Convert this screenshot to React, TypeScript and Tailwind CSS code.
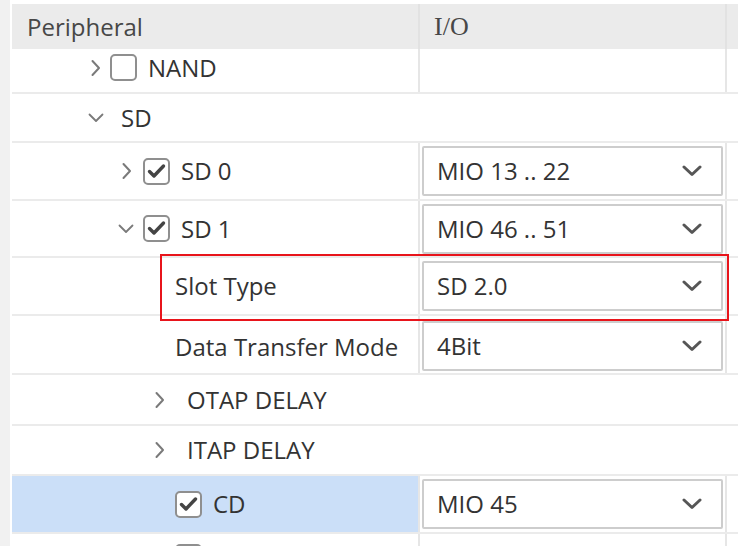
import React from "react";

const font = { fontFamily: '"Open Sans", "Noto Sans", sans-serif' };

function ChevronRight() {
  return (
    <svg width="12" height="18" viewBox="0 0 12 18" className="shrink-0">
      <path d="M2.5 2 L9 9 L2.5 16" fill="none" stroke="#7a7a7a" strokeWidth="2" strokeLinecap="round" strokeLinejoin="round" />
    </svg>
  );
}

function ChevronDown() {
  return (
    <svg width="16" height="10" viewBox="0 0 16 10" className="shrink-0">
      <path d="M1.5 1.5 L8 8 L14.5 1.5" fill="none" stroke="#7a7a7a" strokeWidth="1.8" strokeLinecap="round" strokeLinejoin="round" />
    </svg>
  );
}

function Checkbox({ checked }: { checked: boolean }) {
  return (
    <div className="w-[27px] h-[27px] shrink-0 rounded-[5px] border-2 border-[#8f8f8f] bg-white flex items-center justify-center">
      {checked && (
        <svg width="21" height="21" viewBox="0 0 21 21">
          <path d="M3.5 10.5 L8 15 L17.5 5" fill="none" stroke="#444444" strokeWidth="3.4" strokeLinecap="round" strokeLinejoin="round" />
        </svg>
      )}
    </div>
  );
}

function Dropdown({ value }: { value: string }) {
  return (
    <div className="h-[50px] ml-[2px] mr-[2px] border-2 border-[#cdcdcd] rounded-[2px] bg-white flex items-center justify-between pl-[13px] pr-[19px]">
      <span className="text-[24px] text-[#333333] leading-none" style={font}>{value}</span>
      <svg width="20" height="12" viewBox="0 0 20 12">
        <path d="M2 2 L10 9.5 L18 2" fill="none" stroke="#565656" strokeWidth="3" strokeLinecap="round" strokeLinejoin="round" />
      </svg>
    </div>
  );
}

function TwoCol({
  h,
  left,
  right,
  selected,
}: {
  h: string;
  left: React.ReactNode;
  right?: React.ReactNode;
  selected?: boolean;
}) {
  return (
    <div className={`flex border-b-2 border-[#ebebeb] ${h}`}>
      <div className={`w-[408px] shrink-0 border-r-2 border-[#e6e6e6] flex items-center ${selected ? "bg-[#cbdff8]" : ""}`}>
        {left}
      </div>
      <div className="w-[307px] shrink-0 border-r-2 border-[#e6e6e6] flex flex-col justify-center">{right}</div>
      <div className="flex-1" />
    </div>
  );
}

function Span({ h, children }: { h: string; children: React.ReactNode }) {
  return <div className={`flex items-center border-b-2 border-[#ebebeb] ${h}`}>{children}</div>;
}

const txt = "text-[24px] text-[#333333] leading-none";

export default function App() {
  return (
    <div className="w-[738px] h-[546px] overflow-hidden bg-white flex" style={font}>
      <div className="w-[10px] shrink-0 bg-[#f1f1f1]" />
      <div className="w-[2px] shrink-0 bg-white" />
      <div className="flex-1 flex flex-col pt-[4px]">
        {/* header */}
        <div className="flex h-[45px] bg-[#ebebeb] shrink-0">
          <div className="w-[408px] shrink-0 border-r-2 border-[#e2e2e2] flex items-center pl-[15px]">
            <span className="text-[24px] text-[#474747] leading-none">Peripheral</span>
          </div>
          <div className="w-[307px] shrink-0 border-r-2 border-[#e2e2e2] flex items-center pl-[14px]">
            <span className="text-[26px] text-[#474747] leading-none" style={{ fontFamily: '"Liberation Serif", serif' }}>
              I/O
            </span>
          </div>
          <div className="flex-1" />
        </div>

        {/* NAND */}
        <TwoCol
          h="h-[45px] shrink-0"
          left={
            <div className="flex items-center pl-[78px] pb-[6px]">
              <ChevronRight />
              <div className="w-[8px]" />
              <Checkbox checked={false} />
              <span className={`${txt} ml-[11px]`}>NAND</span>
            </div>
          }
        />

        {/* SD */}
        <Span h="h-[49px] shrink-0">
          <div className="flex items-center pl-[76px]">
            <ChevronDown />
            <span className={`${txt} ml-[17px]`}>SD</span>
          </div>
        </Span>

        {/* SD 0 */}
        <TwoCol
          h="h-[58px] shrink-0"
          left={
            <div className="flex items-center pl-[109px]">
              <ChevronRight />
              <div className="w-[10px]" />
              <Checkbox checked />
              <span className={`${txt} ml-[11px]`}>SD 0</span>
            </div>
          }
          right={<Dropdown value="MIO 13 .. 22" />}
        />

        {/* SD 1 */}
        <TwoCol
          h="h-[57px] shrink-0"
          left={
            <div className="flex items-center pl-[106px]">
              <ChevronDown />
              <div className="w-[9px]" />
              <Checkbox checked />
              <span className={`${txt} ml-[11px]`}>SD 1</span>
            </div>
          }
          right={<Dropdown value="MIO 46 .. 51" />}
        />

        {/* Slot Type */}
        <TwoCol
          h="h-[58px] shrink-0"
          left={<span className={`${txt} pl-[163px]`}>Slot Type</span>}
          right={<Dropdown value="SD 2.0" />}
        />

        {/* Data Transfer Mode */}
        <TwoCol
          h="h-[59px] shrink-0"
          left={<span className={`${txt} pl-[163px] pt-[4px]`}>Data Transfer Mode</span>}
          right={<div className="pt-[3px]"><Dropdown value="4Bit" /></div>}
        />

        {/* OTAP */}
        <Span h="h-[51px] shrink-0">
          <div className="flex items-center pl-[142px]">
            <ChevronRight />
            <span className={`${txt} ml-[21px]`}>OTAP DELAY</span>
          </div>
        </Span>

        {/* ITAP */}
        <Span h="h-[50px] shrink-0">
          <div className="flex items-center pl-[142px]">
            <ChevronRight />
            <span className={`${txt} ml-[21px]`}>ITAP DELAY</span>
          </div>
        </Span>

        {/* CD */}
        <TwoCol
          h="h-[58px] shrink-0"
          selected
          left={
            <div className="flex items-center pl-[163px]">
              <Checkbox checked />
              <span className={`${txt} ml-[11px]`}>CD</span>
            </div>
          }
          right={<Dropdown value="MIO 45" />}
        />

        {/* partial next row */}
        <div className="flex h-[58px] shrink-0">
          <div className="w-[408px] shrink-0 border-r-2 border-[#e6e6e6] flex items-start pt-[10px] pl-[163px]">
            <Checkbox checked={false} />
          </div>
          <div className="w-[307px] shrink-0 border-r-2 border-[#e6e6e6]" />
          <div className="flex-1" />
        </div>
      </div>

      {/* highlight overlay */}
      <div className="absolute left-[160px] top-[254px] w-[569px] h-[67px] border-2 border-[#e8141b] pointer-events-none" />
    </div>
  );
}
